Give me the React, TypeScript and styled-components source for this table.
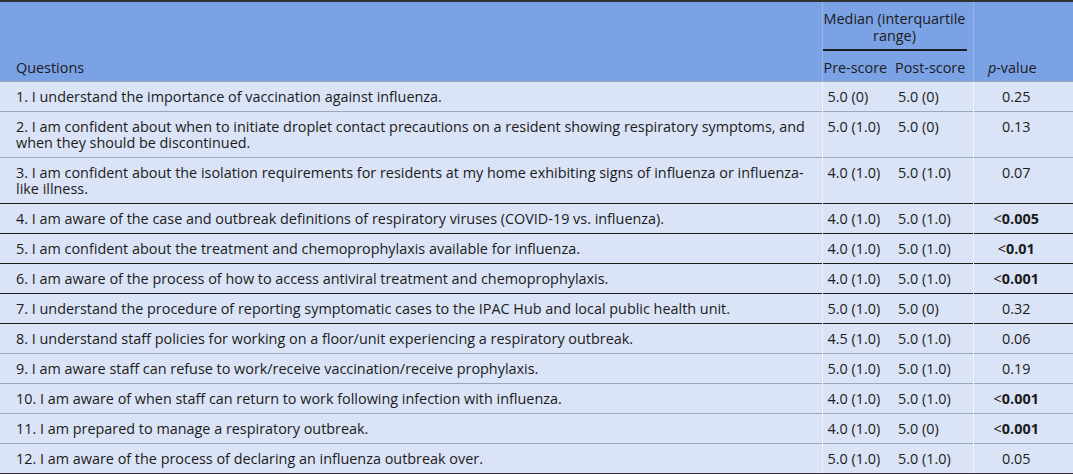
import React from "react";
import styled, { createGlobalStyle } from "styled-components";

const GlobalStyle = createGlobalStyle`
  html, body { margin: 0; padding: 0; background: #ffffff; }
  body { font-family: "Open Sans", "Noto Sans", sans-serif; color: #1b1b1b; }
`;

const Table = styled.table`
  width: 1073px;
  border-collapse: collapse;
  table-layout: fixed;
  font-family: "Open Sans", "Noto Sans", sans-serif;
  font-size: 14.4px;
  line-height: 16px;
  color: #1b1b1b;
  border-top: 2px solid #333333;
  border-bottom: 2px solid #333333;
`;

const HeadRow = styled.tr`
  background: #7ba2e5;
`;

const Th = styled.th<{ $align?: "left" | "center"; $sep?: boolean; $padL?: number; $padR?: number }>`
  font-weight: 400;
  white-space: nowrap;
  text-align: ${(p) => p.$align ?? "left"};
  vertical-align: bottom;
  padding: 9px ${(p) => p.$padR ?? 0}px 5px ${(p) => p.$padL ?? 0}px;
  border-left: ${(p) => (p.$sep ? "1px solid rgba(255,255,255,0.22)" : "none")};
`;

const GroupTh = styled.th`
  font-weight: 400;
  text-align: center;
  vertical-align: bottom;
  padding: 8px 6px 0 0;
  border-left: 1px solid rgba(255, 255, 255, 0.22);
`;

const GroupLabel = styled.div`
  line-height: 17px;
  white-space: nowrap;
  padding: 0 0 5px;
  border-bottom: 2px solid #1b1b1b;
`;

const BodyRow = styled.tr<{ $rule: "light" | "dark" }>`
  background: #dae4f6;
  border-top: 1px solid ${(p) => (p.$rule === "dark" ? "#1b1b1b" : "#9ba6b8")};
`;

const Td = styled.td<{ $align?: "left" | "center"; $sep?: boolean; $padL?: number; $padR?: number }>`
  text-align: ${(p) => p.$align ?? "left"};
  vertical-align: top;
  padding: 7px ${(p) => p.$padR ?? 0}px 6px ${(p) => p.$padL ?? 0}px;
  border-left: ${(p) => (p.$sep ? "1px solid rgba(255,255,255,0.5)" : "none")};
`;

const Strong = styled.b`
  font-weight: 700;
`;

const Italic = styled.i`
  font-style: italic;
`;

type Row = {
  q: string;
  pre: string;
  post: string;
  p: string;
  lt?: boolean;
  rule: "light" | "dark";
};

const rows: Row[] = [
  { q: "1. I understand the importance of vaccination against influenza.", pre: "5.0 (0)", post: "5.0 (0)", p: "0.25", rule: "light" },
  {
    q: "2. I am confident about when to initiate droplet contact precautions on a resident showing respiratory symptoms, and when they should be discontinued.",
    pre: "5.0 (1.0)", post: "5.0 (0)", p: "0.13", rule: "light",
  },
  {
    q: "3. I am confident about the isolation requirements for residents at my home exhibiting signs of influenza or influenza-like illness.",
    pre: "4.0 (1.0)", post: "5.0 (1.0)", p: "0.07", rule: "light",
  },
  { q: "4. I am aware of the case and outbreak definitions of respiratory viruses (COVID-19 vs. influenza).", pre: "4.0 (1.0)", post: "5.0 (1.0)", p: "0.005", lt: true, rule: "dark" },
  { q: "5. I am confident about the treatment and chemoprophylaxis available for influenza.", pre: "4.0 (1.0)", post: "5.0 (1.0)", p: "0.01", lt: true, rule: "dark" },
  { q: "6. I am aware of the process of how to access antiviral treatment and chemoprophylaxis.", pre: "4.0 (1.0)", post: "5.0 (1.0)", p: "0.001", lt: true, rule: "dark" },
  { q: "7. I understand the procedure of reporting symptomatic cases to the IPAC Hub and local public health unit.", pre: "5.0 (1.0)", post: "5.0 (0)", p: "0.32", rule: "dark" },
  { q: "8. I understand staff policies for working on a floor/unit experiencing a respiratory outbreak.", pre: "4.5 (1.0)", post: "5.0 (1.0)", p: "0.06", rule: "dark" },
  { q: "9. I am aware staff can refuse to work/receive vaccination/receive prophylaxis.", pre: "5.0 (1.0)", post: "5.0 (1.0)", p: "0.19", rule: "light" },
  { q: "10. I am aware of when staff can return to work following infection with influenza.", pre: "4.0 (1.0)", post: "5.0 (1.0)", p: "0.001", lt: true, rule: "light" },
  { q: "11. I am prepared to manage a respiratory outbreak.", pre: "4.0 (1.0)", post: "5.0 (0)", p: "0.001", lt: true, rule: "light" },
  { q: "12. I am aware of the process of declaring an influenza outbreak over.", pre: "5.0 (1.0)", post: "5.0 (1.0)", p: "0.05", rule: "light" },
];

export default function App() {
  return (
    <>
      <GlobalStyle />
      <Table>
        <colgroup>
          <col style={{ width: 822 }} />
          <col style={{ width: 72 }} />
          <col style={{ width: 79 }} />
          <col style={{ width: 100 }} />
        </colgroup>
        <thead>
          <HeadRow>
            <Th rowSpan={2} $padL={16}>Questions</Th>
            <GroupTh colSpan={2}>
              <GroupLabel>
                Median (interquartile
                <br />
                range)
              </GroupLabel>
            </GroupTh>
            <Th rowSpan={2} $align="center" $sep $padR={22}>
              <Italic>p</Italic>-value
            </Th>
          </HeadRow>
          <HeadRow>
            <Th $padL={1} $sep>Pre-score</Th>
            <Th $padL={1}>Post-score</Th>
          </HeadRow>
        </thead>
        <tbody>
          {rows.map((r, i) => (
            <BodyRow key={i} $rule={r.rule}>
              <Td $padL={16} $padR={6}>{r.q}</Td>
              <Td $padL={5} $sep>{r.pre}</Td>
              <Td $padL={4}>{r.post}</Td>
              <Td $align="center" $sep $padR={14}>
                {r.lt ? (
                  <>
                    &lt;<Strong>{r.p}</Strong>
                  </>
                ) : (
                  r.p
                )}
              </Td>
            </BodyRow>
          ))}
        </tbody>
      </Table>
    </>
  );
}
